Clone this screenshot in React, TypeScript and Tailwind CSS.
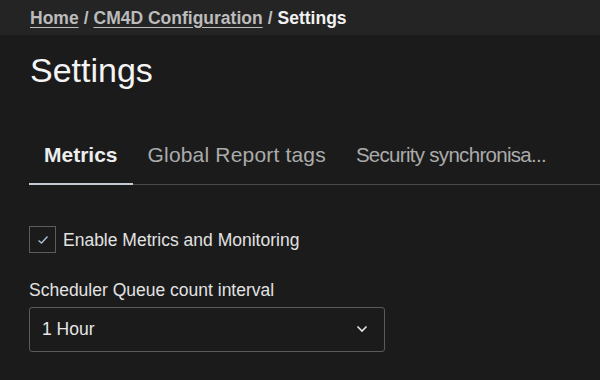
const tabs = ["Metrics", "Global Report tags", "Security synchronisa..."];

export default function App() {
  return (
    <div className="h-[380px] w-[600px] overflow-hidden bg-[#1b1b1b] font-['Liberation_Sans',Arial,sans-serif] text-[#e6e6e6]">
      <header className="flex h-[35px] items-center bg-[#242424] pl-[30px] text-[17.5px] font-bold leading-[20px]">
        <a href="#" className="text-[#bcbcbc] underline decoration-[#bcbcbc] underline-offset-[3px]">
          Home
        </a>
        <span className="px-[5px] text-[#bcbcbc]">/</span>
        <a href="#" className="text-[#bcbcbc] underline decoration-[#bcbcbc] underline-offset-[3px]">
          CM4D Configuration
        </a>
        <span className="px-[5px] text-[#bcbcbc]">/</span>
        <span className="text-[#f2f2f2]">Settings</span>
      </header>

      <main className="pl-[29px]">
        <h1 className="mt-[15px] pl-[1px] text-[34px] leading-[40px] text-[#f4f4f4]">Settings</h1>

        <div className="mt-[37px] flex border-b border-[#4a4a4a]">
          {tabs.map((t, i) => (
            <button
              key={t}
              title={i === 2 ? "Security synchronisation" : undefined}
              className={
                i === 0
                  ? "-mb-px border-b-2 border-[#c4cad4] px-[15px] pb-[16px] pt-[16px] text-[21px] font-bold leading-[24px] text-[#ededed]"
                  : "-mb-px border-b-2 border-transparent px-[15px] pb-[16px] pt-[16px] text-[21px] leading-[24px] text-[#ababab]"
              }
            >
              {i === 2 ? (
                <span className="block whitespace-nowrap text-[20.5px] tracking-[-0.7px]">{t}</span>
              ) : (
                <span className={i === 1 ? "block tracking-[0.18px]" : "block"}>{t}</span>
              )}
            </button>
          ))}
        </div>

        <label className="mt-[41px] flex items-center gap-[7px] text-[17.5px] leading-[20px] text-[#e2e2e2]">
          <span className="flex h-[27px] w-[27px] items-center justify-center border border-[#5c5c5c]">
            <svg width="12" height="10" viewBox="0 0 12 10" fill="none">
              <path d="M1.5 5.5 L4.5 8 L10.5 1.5" stroke="#a9bdd6" strokeWidth="1.4" />
            </svg>
          </span>
          Enable Metrics and Monitoring
        </label>

        <div className="mt-[27px] text-[17.5px] leading-[20px] text-[#e2e2e2]">Scheduler Queue count interval</div>

        <div className="mt-[7px] flex h-[45px] w-[356px] items-center justify-between rounded-[3px] border border-[#5a5a5a] pb-px pl-[12px] pr-[16px] text-[17.5px] leading-[20px] text-[#e6e6e6]">
          <span>1 Hour</span>
          <svg width="12" height="8" viewBox="0 0 12 8" fill="none">
            <path d="M1.5 1.5 L6 6 L10.5 1.5" stroke="#e6e6e6" strokeWidth="1.6" />
          </svg>
        </div>
      </main>
    </div>
  );
}
